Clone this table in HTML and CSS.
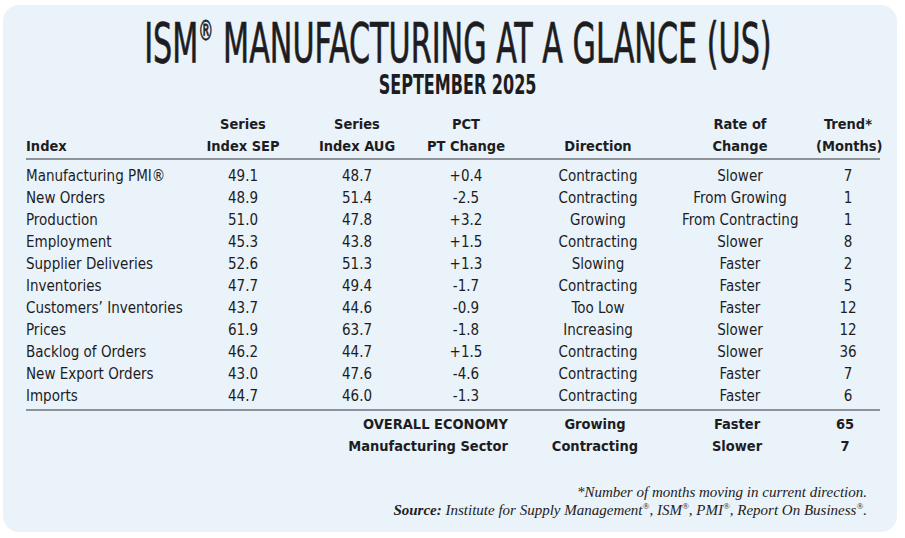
FILE: index.html
```html
<!DOCTYPE html>
<html>
<head>
<meta charset="utf-8">
<link rel="stylesheet" href="styles.css">
</head>
<body>
<div class="card">
  <h1 class="title"><span class="squeeze">ISM<sup class="reg">®</sup> MANUFACTURING AT A GLANCE (US)</span></h1>
  <h2 class="subtitle"><span class="squeeze">SEPTEMBER 2025</span></h2>

  <div class="table">
    <div class="row head">
      <div class="c1">Index</div>
      <div>Series<br>Index SEP</div>
      <div>Series<br>Index AUG</div>
      <div>PCT<br>PT Change</div>
      <div>Direction</div>
      <div>Rate of<br>Change</div>
      <div class="c7">Trend*<br>(Months)</div>
    </div>

    <div class="body">
      <div class="row"><div class="c1">Manufacturing PMI®</div><div>49.1</div><div>48.7</div><div>+0.4</div><div>Contracting</div><div>Slower</div><div class="c7">7</div></div>
      <div class="row"><div class="c1">New Orders</div><div>48.9</div><div>51.4</div><div>-2.5</div><div>Contracting</div><div>From Growing</div><div class="c7">1</div></div>
      <div class="row"><div class="c1">Production</div><div>51.0</div><div>47.8</div><div>+3.2</div><div>Growing</div><div>From Contracting</div><div class="c7">1</div></div>
      <div class="row"><div class="c1">Employment</div><div>45.3</div><div>43.8</div><div>+1.5</div><div>Contracting</div><div>Slower</div><div class="c7">8</div></div>
      <div class="row"><div class="c1">Supplier Deliveries</div><div>52.6</div><div>51.3</div><div>+1.3</div><div>Slowing</div><div>Faster</div><div class="c7">2</div></div>
      <div class="row"><div class="c1">Inventories</div><div>47.7</div><div>49.4</div><div>-1.7</div><div>Contracting</div><div>Faster</div><div class="c7">5</div></div>
      <div class="row"><div class="c1">Customers’ Inventories</div><div>43.7</div><div>44.6</div><div>-0.9</div><div>Too Low</div><div>Faster</div><div class="c7">12</div></div>
      <div class="row"><div class="c1">Prices</div><div>61.9</div><div>63.7</div><div>-1.8</div><div>Increasing</div><div>Slower</div><div class="c7">12</div></div>
      <div class="row"><div class="c1">Backlog of Orders</div><div>46.2</div><div>44.7</div><div>+1.5</div><div>Contracting</div><div>Slower</div><div class="c7">36</div></div>
      <div class="row"><div class="c1">New Export Orders</div><div>43.0</div><div>47.6</div><div>-4.6</div><div>Contracting</div><div>Faster</div><div class="c7">7</div></div>
      <div class="row"><div class="c1">Imports</div><div>44.7</div><div>46.0</div><div>-1.3</div><div>Contracting</div><div>Faster</div><div class="c7">6</div></div>
    </div>

    <div class="summary">
      <div class="row sum"><div class="label">OVERALL ECONOMY</div><div>Growing</div><div>Faster</div><div class="c7">65</div></div>
      <div class="row sum"><div class="label">Manufacturing Sector</div><div>Contracting</div><div>Slower</div><div class="c7">7</div></div>
    </div>
  </div>

  <div class="notes">
    <p>*Number of months moving in current direction.</p>
    <p><b>Source:</b> Institute for Supply Management<sup>®</sup>, ISM<sup>®</sup>, PMI<sup>®</sup>, Report On Business<sup>®</sup>.</p>
  </div>
</div>
</body>
</html>
```

FILE: styles.css
```css
* { box-sizing: border-box; }
html, body { margin: 0; padding: 0; background: #ffffff; }
body { width: 905px; height: 538px; overflow: hidden; }

.card {
  margin: 5px 0 0 3px;
  width: 894px;
  height: 527px;
  background: #eaf2fa;
  border-radius: 16px;
  color: #1d1d1f;
  padding-top: 19px;
  font-family: "DejaVu Sans Condensed", "Liberation Sans", sans-serif;
}

.title, .subtitle {
  margin: 0;
  padding-left: 15px;
  display: flex;
  justify-content: center;
  white-space: nowrap;
  font-family: "DejaVu Sans Condensed", "Liberation Sans", sans-serif;
}
.squeeze { display: inline-block; flex: none; transform-origin: center; }
.title { font-size: 56px; line-height: 38px; font-weight: 400; -webkit-text-stroke: 0.7px #1d1d1f; }
.title .squeeze { transform: scaleX(0.60); }
.reg { font-size: 28px; vertical-align: 0; position: relative; top: -22px; }
.subtitle { font-size: 27px; line-height: 26px; font-weight: 700; }
.subtitle .squeeze { transform: scaleX(0.66); }

.table { margin: 15px 0 0 23px; width: 854px; }
.row {
  display: grid;
  grid-template-columns: 164px 106px 122px 96px 168px 116px 82px;
  font-size: 15px;
  line-height: 22px;
  text-align: center;
  white-space: nowrap;
}
.row .c1 { text-align: left; }
.row .c7 { padding-left: 18px; }

.head {
  font-weight: 700;
  font-size: 14.5px;
  line-height: 22px;
  align-items: end;
  padding-bottom: 1px;
  border-bottom: 2px solid #8e939a;
}
.body { padding: 5px 0 2px; border-bottom: 2px solid #8e939a; }
.summary { padding-top: 2px; }
.sum { font-weight: 700; font-size: 14.5px; grid-template-columns: 485px 168px 116px 82px; }
.sum .label { text-align: right; padding-right: 3px; }

.notes {
  margin: 26px 30px 0 0;
  text-align: right;
  font-family: "Liberation Serif", serif;
  font-style: italic;
  font-size: 15px;
  line-height: 18px;
  color: #222;
}
.notes p { margin: 0; }
.notes sup { font-size: 9px; line-height: 0; }
```
